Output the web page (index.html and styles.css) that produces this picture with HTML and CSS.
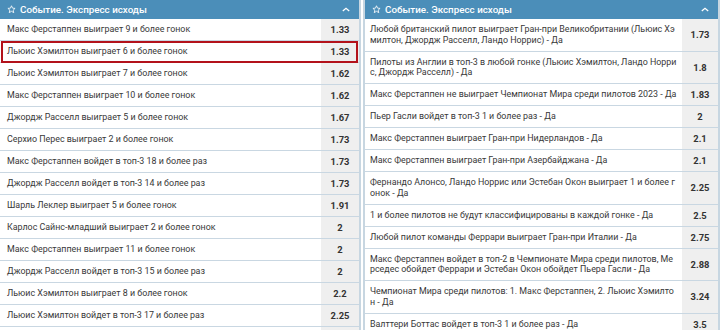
FILE: index.html
```html
<!DOCTYPE html>
<html lang="ru">
<head>
<meta charset="utf-8">
<link rel="stylesheet" href="styles.css">
</head>
<body>
<div class="wrap">
  <section class="panel left">
    <div class="head">
      <svg class="star" viewBox="0 0 12 12" width="9" height="9"><path d="M6 1 L7.4 4.2 L10.8 4.5 L8.2 6.8 L9 10.2 L6 8.4 L3 10.2 L3.8 6.8 L1.2 4.5 L4.6 4.2 Z" fill="none" stroke="#fff" stroke-width="1.1" stroke-linejoin="round"/></svg>
      <span class="title">Событие. Экспресс исходы</span>
      <svg class="chev" viewBox="0 0 10 6" width="8" height="5"><path d="M1 5 L5 1.5 L9 5" fill="none" stroke="#fff" stroke-width="1.6"/></svg>
    </div>
    <div class="row"><div class="name">Макс Ферстаппен выиграет 9 и более гонок</div><div class="odd">1.33</div></div>
    <div class="row sel"><div class="name">Льюис Хэмилтон выиграет 6 и более гонок</div><div class="odd">1.33</div></div>
    <div class="row"><div class="name">Льюис Хэмилтон выиграет 7 и более гонок</div><div class="odd">1.62</div></div>
    <div class="row"><div class="name">Макс Ферстаппен выиграет 10 и более гонок</div><div class="odd">1.62</div></div>
    <div class="row"><div class="name">Джордж Расселл выиграет 5 и более гонок</div><div class="odd">1.67</div></div>
    <div class="row"><div class="name">Серхио Перес выиграет 2 и более гонок</div><div class="odd">1.73</div></div>
    <div class="row"><div class="name">Макс Ферстаппен войдет в топ-3 18 и более раз</div><div class="odd">1.73</div></div>
    <div class="row"><div class="name">Джордж Расселл войдет в топ-3 14 и более раз</div><div class="odd">1.73</div></div>
    <div class="row"><div class="name">Шарль Леклер выиграет 5 и более гонок</div><div class="odd">1.91</div></div>
    <div class="row"><div class="name">Карлос Сайнс-младший выиграет 2 и более гонок</div><div class="odd">2</div></div>
    <div class="row"><div class="name">Макс Ферстаппен выиграет 11 и более гонок</div><div class="odd">2</div></div>
    <div class="row"><div class="name">Джордж Расселл войдет в топ-3 15 и более раз</div><div class="odd">2</div></div>
    <div class="row"><div class="name">Льюис Хэмилтон выиграет 8 и более гонок</div><div class="odd">2.2</div></div>
    <div class="row"><div class="name">Льюис Хэмилтон войдет в топ-3 17 и более раз</div><div class="odd">2.25</div></div>
    <div class="row"><div class="name">Макс Ферстаппен выиграет 12 и более гонок</div><div class="odd">2.5</div></div>
  </section>
  <section class="panel right">
    <div class="head">
      <svg class="star" viewBox="0 0 12 12" width="9" height="9"><path d="M6 1 L7.4 4.2 L10.8 4.5 L8.2 6.8 L9 10.2 L6 8.4 L3 10.2 L3.8 6.8 L1.2 4.5 L4.6 4.2 Z" fill="none" stroke="#fff" stroke-width="1.1" stroke-linejoin="round"/></svg>
      <span class="title">Событие. Экспресс исходы</span>
      <svg class="chev" viewBox="0 0 10 6" width="8" height="5"><path d="M1 5 L5 1.5 L9 5" fill="none" stroke="#fff" stroke-width="1.6"/></svg>
    </div>
    <div class="row"><div class="name">Любой британский пилот выиграет Гран-при Великобритании (Льюис Хэмилтон, Джордж Расселл, Ландо Норрис) - Да</div><div class="odd">1.73</div></div>
    <div class="row"><div class="name">Пилоты из Англии в топ-3 в любой гонке (Льюис Хэмилтон, Ландо Норрис, Джордж Расселл) - Да</div><div class="odd">1.8</div></div>
    <div class="row"><div class="name">Макс Ферстаппен не выиграет Чемпионат Мира среди пилотов 2023 - Да</div><div class="odd">1.83</div></div>
    <div class="row"><div class="name">Пьер Гасли войдет в топ-3 1 и более раз - Да</div><div class="odd">2</div></div>
    <div class="row"><div class="name">Макс Ферстаппен выиграет Гран-при Нидерландов - Да</div><div class="odd">2.1</div></div>
    <div class="row"><div class="name">Макс Ферстаппен выиграет Гран-при Азербайджана - Да</div><div class="odd">2.1</div></div>
    <div class="row"><div class="name">Фернандо Алонсо, Ландо Норрис или Эстебан Окон выиграет 1 и более гонок - Да</div><div class="odd">2.25</div></div>
    <div class="row"><div class="name">1 и более пилотов не будут классифицированы в каждой гонке - Да</div><div class="odd">2.5</div></div>
    <div class="row"><div class="name">Любой пилот команды Феррари выиграет Гран-при Италии - Да</div><div class="odd">2.75</div></div>
    <div class="row"><div class="name">Макс Ферстаппен войдет в топ-2 в Чемпионате Мира среди пилотов, Мерседес обойдет Феррари и Эстебан Окон обойдет Пьера Гасли - Да</div><div class="odd">2.88</div></div>
    <div class="row"><div class="name">Чемпионат Мира среди пилотов: 1. Макс Ферстаппен, 2. Льюис Хэмилтон - Да</div><div class="odd">3.24</div></div>
    <div class="row"><div class="name">Валттери Боттас войдет в топ-3 1 и более раз - Да</div><div class="odd">3.5</div></div>
  </section>
</div>
</body>
</html>
```
FILE: styles.css
```css
html, body {
  margin: 0;
  padding: 0;
  background: #fff;
}
body {
  font-family: Roboto, "Liberation Sans", Arial, sans-serif;
  font-size: 8.9px;
  color: #333;
  width: 720px;
  height: 330px;
  overflow: hidden;
}
.wrap {
  display: flex;
  gap: 2px;
  align-items: flex-start;
}
.panel {
  display: flex;
  flex-direction: column;
}
.left {
  width: 360px;
  border-right: 2px solid #c7d6e1;
}
.right {
  width: 354px;
  border-left: 2px solid #c7d6e1;
  border-right: 2px solid #c7d6e1;
}
.head {
  height: 19px;
  background: #4b8eb9;
  color: #fff;
  display: flex;
  align-items: center;
  padding: 0 7px;
  gap: 4px;
}
.title {
  font-size: 9.8px;
  font-weight: 500;
  flex: 1;
}
.chev {
  margin-right: 2px;
}
.row {
  display: grid;
  grid-template-columns: 1fr 38px;
  border-bottom: 1.5px solid #c9d7e2;
  position: relative;
}
.right .row {
  grid-template-columns: 1fr 36px;
}
.name {
  padding: 5.25px 7px;
  line-height: 10.5px;
  word-break: break-all;
  color: #383838;
}
.right .name {
  padding: 5.25px 4px 5.25px 5px;
}
.odd {
  background: #efefef;
  font-size: 9.4px;
  font-weight: 700;
  display: flex;
  align-items: center;
  justify-content: center;
  color: #333;
}
.sel::after {
  content: "";
  position: absolute;
  left: 1px;
  right: 1px;
  top: 0;
  bottom: -1px;
  border: 2px solid #b3121b;
  pointer-events: none;
}
```
